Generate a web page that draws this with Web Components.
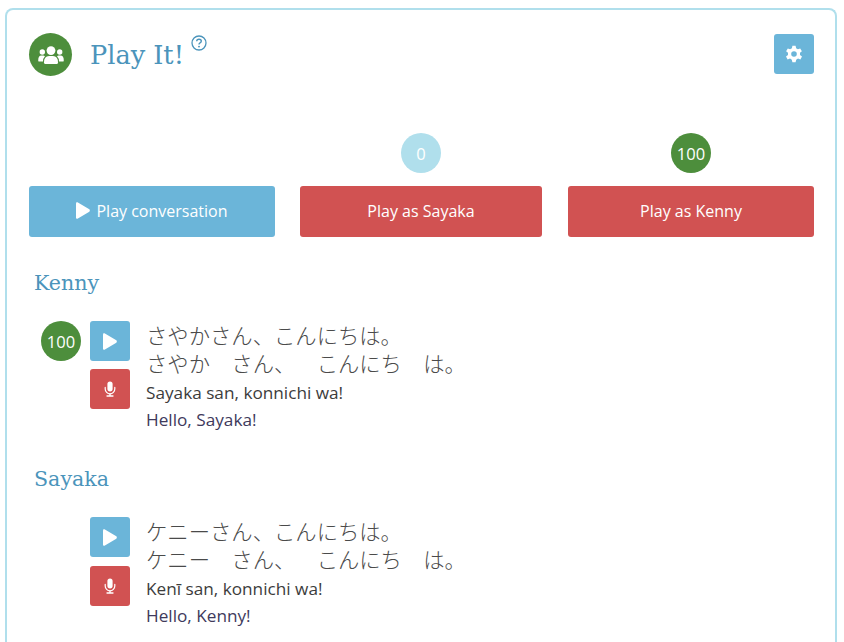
<!DOCTYPE html>
<html>
<head>
<meta charset="utf-8">
<style>
    html, body { margin: 0; height: 642px; overflow: hidden; background: #fff; }
    body { padding: 8px 7px 0 5px; box-sizing: border-box; font-family: "Open Sans", sans-serif; }
</style>
</head>
<body>

<play-card heading="Play It!">
    <play-actions>
        <score-badge value="0" tone="pale" slot="score-a"></score-badge>
        <score-badge value="100" slot="score-b"></score-badge>
    </play-actions>

    <speaker-block name="Kenny" score="100"
        kana="さやかさん、こんにちは。"
        spaced="さやか　さん、　こんにち　は。"
        romaji="Sayaka san, konnichi wa!"
        english="Hello, Sayaka!"></speaker-block>

    <speaker-block name="Sayaka" gap="9"
        kana="ケニーさん、こんにちは。"
        spaced="ケニー　さん、　こんにち　は。"
        romaji="Kenī san, konnichi wa!"
        english="Hello, Kenny!"></speaker-block>
</play-card>

<script>
const PLAY_ICON = `<svg viewBox="0 0 14 17" width="14" height="17"><path fill="#fff" d="M1.5 0.3 L13.3 7.3 Q14.4 8.5 13.3 9.7 L1.5 16.7 Q0 17.2 0 15.6 L0 1.4 Q0 -0.2 1.5 0.3 Z"/></svg>`;

const MIC_ICON = `<svg viewBox="0 0 12 16" width="12" height="16"><rect x="3.4" y="0.4" width="5.2" height="10" rx="2.6" fill="#fff"/><path d="M1.2 6.4 V8 a4.8 4.8 0 0 0 9.6 0 V6.4" fill="none" stroke="#fff" stroke-width="1.2" stroke-linecap="round"/><path d="M6 12.8 V14.6 M3 15 H9" fill="none" stroke="#fff" stroke-width="1.3" stroke-linecap="round"/></svg>`;

class ScoreBadge extends HTMLElement {
    constructor() {
        super();
        this.attachShadow({ mode: 'open' });
    }

    connectedCallback() {
        const value = this.getAttribute('value') || '0';
        const pale = this.getAttribute('tone') === 'pale';
        this.shadowRoot.innerHTML = `
            <style>
                :host {
                    display: flex;
                    align-items: center;
                    justify-content: center;
                    width: 40px;
                    height: 40px;
                    border-radius: 50%;
                    background: ${pale ? '#b0dfec' : '#4d8e3c'};
                    color: #fff;
                    font-size: 16.5px;
                }
            </style>
            ${value}
        `;
    }
}

class SquareButton extends HTMLElement {
    constructor() {
        super();
        this.attachShadow({ mode: 'open' });
    }

    connectedCallback() {
        const tone = this.getAttribute('tone') || 'blue';
        this.shadowRoot.innerHTML = `
            <style>
                :host {
                    display: flex;
                    align-items: center;
                    justify-content: center;
                    width: 40px;
                    height: 40px;
                    border-radius: 3px;
                    background: ${tone === 'red' ? '#d15252' : '#6bb5d9'};
                }
            </style>
            <slot></slot>
        `;
    }
}

class WideButton extends HTMLElement {
    constructor() {
        super();
        this.attachShadow({ mode: 'open' });
    }

    connectedCallback() {
        const tone = this.getAttribute('tone') || 'blue';
        this.shadowRoot.innerHTML = `
            <style>
                :host {
                    display: flex;
                    align-items: center;
                    justify-content: center;
                    gap: 6px;
                    box-sizing: border-box;
                    height: 51px;
                    padding-bottom: 2px;
                    border-radius: 3px;
                    background: ${tone === 'red' ? '#d15252' : '#6bb5d9'};
                    color: #fff;
                    font-size: 16px;
                }
            </style>
            <slot></slot>
        `;
    }
}

class PlayActions extends HTMLElement {
    constructor() {
        super();
        this.attachShadow({ mode: 'open' });
    }

    connectedCallback() {
        this.shadowRoot.innerHTML = `
            <style>
                :host {
                    display: grid;
                    /* the outer columns are a little wider than the middle one */
                    grid-template-columns: 246px 25px 242px 26px 246px;
                    row-gap: 13px;
                }
                .mid { grid-column: 3; }
                .last { grid-column: 5; }
                .score { display: flex; justify-content: center; }
                wide-button { grid-row: 2; }
            </style>
            <div class="score mid"><slot name="score-a"></slot></div>
            <div class="score last"><slot name="score-b"></slot></div>
            <wide-button>${PLAY_ICON}<span>Play conversation</span></wide-button>
            <wide-button class="mid" tone="red">Play as Sayaka</wide-button>
            <wide-button class="last" tone="red">Play as Kenny</wide-button>
        `;
    }
}

class SpeakerBlock extends HTMLElement {
    constructor() {
        super();
        this.attachShadow({ mode: 'open' });
    }

    connectedCallback() {
        const attr = (name) => this.getAttribute(name) || '';
        const score = attr('score');
        this.shadowRoot.innerHTML = `
            <style>
                :host {
                    display: block;
                    padding-left: 5px;
                }
                h3 {
                    margin: 0;
                    font-family: "DejaVu Serif", serif;
                    font-weight: 400;
                    font-size: 20.6px;
                    line-height: 30px;
                    color: #4b94bb;
                }
                .line {
                    display: flex;
                    margin-top: 23px;
                }
                .score-slot {
                    width: 40px;
                    margin-left: 7px;
                }
                .buttons {
                    display: flex;
                    flex-direction: column;
                    gap: ${attr('gap') || 8}px;
                    margin-left: 9px;
                }
                .texts {
                    margin-left: 16px;
                    margin-top: -2px;
                    color: #4a4a4a;
                }
                .jp {
                    font-family: "Noto Sans CJK JP", sans-serif;
                    font-weight: 300;
                    font-size: 21.33px;
                    line-height: 29px;
                    white-space: pre;
                    text-spacing-trim: space-all;
                }
                .jp.top {
                    padding-top: 1px;
                    margin-bottom: -1px;
                }
                .romaji {
                    font-size: 17.2px;
                    line-height: 27px;
                    color: #3c3c3c;
                    margin-top: 2px;
                }
                .english {
                    font-size: 17.2px;
                    line-height: 27px;
                    color: #403a5c;
                }
            </style>
            <h3>${attr('name')}</h3>
            <div class="line">
                <div class="score-slot">${score ? `<score-badge value="${score}"></score-badge>` : ''}</div>
                <div class="buttons">
                    <square-button>${PLAY_ICON}</square-button>
                    <square-button tone="red">${MIC_ICON}</square-button>
                </div>
                <div class="texts">
                    <div class="jp top">${attr('kana')}</div>
                    <div class="jp">${attr('spaced')}</div>
                    <div class="romaji">${attr('romaji')}</div>
                    <div class="english">${attr('english')}</div>
                </div>
            </div>
        `;
    }
}

class PlayCard extends HTMLElement {
    constructor() {
        super();
        this.attachShadow({ mode: 'open' });
    }

    connectedCallback() {
        const heading = this.getAttribute('heading') || '';
        this.shadowRoot.innerHTML = `
            <style>
                :host {
                    display: block;
                    box-sizing: border-box;
                    height: 634px;
                    padding: 23px 21px 0 22px;
                    border: 2px solid #b0dfec;
                    border-bottom: 0;
                    border-radius: 8px 8px 0 0;
                    background: #fff;
                    overflow: hidden;
                }
                header {
                    display: flex;
                    align-items: flex-start;
                    height: 100px;
                }
                .avatar {
                    display: flex;
                    align-items: center;
                    justify-content: center;
                    width: 43px;
                    height: 43px;
                    border-radius: 50%;
                    background: #4d8e3c;
                }
                h2 {
                    margin: 1px 0 0 18px;
                    font-family: "DejaVu Serif", serif;
                    font-weight: 400;
                    font-size: 25.6px;
                    line-height: 42px;
                    color: #4b94bb;
                }
                .help {
                    margin: 2px 0 0 7px;
                }
                .gear {
                    margin-left: auto;
                    margin-top: 1px;
                }
                ::slotted(speaker-block) {
                    margin-top: 31px;
                }
            </style>
            <header>
                <div class="avatar">
                    <svg viewBox="0 0 26 20" width="26" height="20"><g fill="#fff"><circle cx="13" cy="5.6" r="4.4"/><circle cx="4.3" cy="7" r="2.7"/><circle cx="21.7" cy="7" r="2.7"/><path d="M7 19 Q6 19 6 17.6 Q6 11 11 11 H15 Q20 11 20 17.6 Q20 19 19 19 Z"/><path d="M5 16.6 H1.4 Q0.2 16.6 0.2 15.4 Q0.2 10.6 3.4 10.6 H5.2 Q6.2 10.6 7 11.2 Q5 13 5 16.6 Z"/><path d="M21 16.6 H24.6 Q25.8 16.6 25.8 15.4 Q25.8 10.6 22.6 10.6 H20.8 Q19.8 10.6 19 11.2 Q21 13 21 16.6 Z"/></g></svg>
                </div>
                <h2>${heading}</h2>
                <svg class="help" viewBox="0 0 16 16" width="16" height="16"><circle cx="8" cy="8" r="7" fill="none" stroke="#4b94bb" stroke-width="1.3"/><path d="M5.7 6.3 Q5.8 4.2 8 4.2 Q10.3 4.2 10.3 6 Q10.3 7.2 9 7.9 Q8 8.4 8 9.6" fill="none" stroke="#4b94bb" stroke-width="1.4"/><circle cx="8" cy="11.6" r="0.95" fill="#4b94bb"/></svg>
                <square-button class="gear">
                    <svg viewBox="0 0 20 20" width="20" height="20"><path fill="#fff" fill-rule="evenodd" d="M8.4 0.8 H11.6 L12.1 3.2 L13.9 4.2 L16.2 3.4 L17.9 6.2 L16 7.8 V9.9 L18 11.6 L16.4 14.4 L14 13.6 L12.2 14.7 L11.6 17.2 H8.4 L7.8 14.7 L6 13.6 L3.6 14.4 L2 11.6 L4 9.9 V7.8 L2.1 6.2 L3.8 3.4 L6.1 4.2 L7.9 3.2 Z M10 6.2 A2.8 2.8 0 1 0 10 11.8 A2.8 2.8 0 1 0 10 6.2 Z" transform="translate(0 1)"/></svg>
                </square-button>
            </header>
            <slot></slot>
        `;
    }
}

customElements.define('score-badge', ScoreBadge);
customElements.define('square-button', SquareButton);
customElements.define('wide-button', WideButton);
customElements.define('play-actions', PlayActions);
customElements.define('speaker-block', SpeakerBlock);
customElements.define('play-card', PlayCard);
</script>
</body>
</html>
